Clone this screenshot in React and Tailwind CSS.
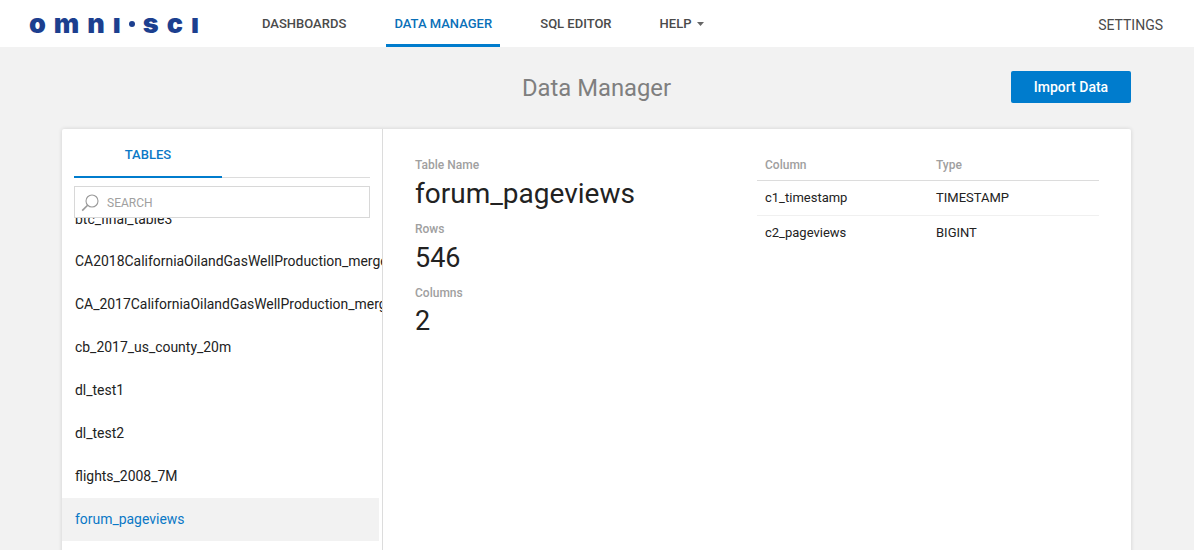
import React from "react";

const tables = [
  "CA2018CaliforniaOilandGasWellProduction_merged",
  "CA_2017CaliforniaOilandGasWellProduction_merged",
  "cb_2017_us_county_20m",
  "dl_test1",
  "dl_test2",
  "flights_2008_7M",
];

function Nav({ children, active, className = "" }) {
  return (
    <div className={`h-full flex items-center border-b-[3px] text-[13px] font-medium leading-none pt-[3px] ${active ? "border-[#007ccd] text-[#0a70b8]" : "border-transparent text-[#4a4a4a]"} ${className}`}>
      {children}
    </div>
  );
}

function Stat({ label, value, valueClass }) {
  return (
    <div>
      <div className="text-[12px] font-medium text-[#a0a0a0] leading-[14px]">{label}</div>
      <div className={`${valueClass} h-[40px] text-[#222]`}>{value}</div>
    </div>
  );
}

export default function App() {
  return (
    <div className="w-[1194px] h-[550px] overflow-hidden bg-[#f2f2f2] font-['Roboto',sans-serif]">
      <header className="h-[47px] bg-white flex items-stretch pl-[29px] pr-[31px]">
        <div className="w-[170px] self-center flex items-center justify-between font-['Inter',sans-serif] font-black text-[27px] leading-none text-[#1c3f8f] h-[30px] -mt-[1px]">
          <span>o</span><span>m</span><span>n</span><span>ı</span>
          <span className="w-[6px] h-[6px] rounded-full bg-[#1c3f8f] mt-[2px]" />
          <span>s</span><span>c</span><span>ı</span>
        </div>
        <nav className="flex items-stretch ml-[63px]">
          <Nav>DASHBOARDS</Nav>
          <Nav active className="ml-[40px] px-2 w-[114px] justify-center">DATA MANAGER</Nav>
          <Nav className="ml-[40px]">SQL EDITOR</Nav>
          <Nav className="ml-[48px]">
            HELP
            <svg className="ml-[6px] mt-[1px]" width="7" height="4" viewBox="0 0 7 4"><path d="M0 0h7L3.5 4z" fill="#666" /></svg>
          </Nav>
        </nav>
        <div className="ml-auto self-center pt-[3px] text-[14px] text-[#4a4a4a]">SETTINGS</div>
      </header>

      <div className="relative h-[82px] flex items-center justify-center">
        <h1 className="text-[23.8px] text-[#7f7f7f] leading-none pt-[2px] pr-[1px]">Data Manager</h1>
        <button className="absolute left-[1011px] top-[24px] w-[120px] h-[32px] bg-[#007ccd] rounded-[2px] text-white text-[14px] font-medium">Import Data</button>
      </div>

      <main className="mx-[62px] w-[1069px] h-[500px] bg-white rounded-t-[2px] shadow-[0_0_4px_rgba(0,0,0,0.14)] flex">
        <aside className="w-[321px] border-r border-[#dcdcdc] shrink-0 flex flex-col relative">
          <div className="mx-[12px] h-[49px] border-b border-[#dcdcdc]">
            <div className="w-[148px] h-[49px] border-b-2 border-[#007ccd] text-[#0a78c6] text-[13px] font-medium flex items-center justify-center pt-[4px]">TABLES</div>
          </div>
          <div className="relative z-10 mx-[12px] mt-[8px] h-[32px] bg-white border border-[#d8d8d8] flex items-center pl-[6px] pt-[1px] text-[12px] text-[#a0a0a0]">
            <svg width="18" height="18" viewBox="0 0 18 18" fill="none" stroke="#9a9a9a" strokeWidth="1.1" className="mr-[8px]">
              <circle cx="11" cy="7" r="6" />
              <path d="M6.6 11.2 1.2 16.6" strokeWidth="1.6" />
            </svg>
            SEARCH
          </div>
          <div className="flex-1 overflow-hidden -mt-[9px]">
            <div className="h-[31px] pl-[13px] text-[13.95px] text-[#222] leading-[20px] whitespace-nowrap">btc_final_table3</div>
            {tables.map((t) => (
              <div key={t} className="h-[43px] pl-[13px] flex items-center text-[13.95px] text-[#222] whitespace-nowrap overflow-hidden">{t}</div>
            ))}
            <div className="h-[43px] w-[317px] pl-[13px] flex items-center text-[13.95px] text-[#0a78c6] bg-[#f2f2f2]">forum_pageviews</div>
          </div>
        </aside>

        <section className="flex-1 flex pt-[29px] pl-[32px]">
          <div className="w-[342px]">
            <Stat label="Table Name" value="forum_pageviews" valueClass="text-[28px] leading-[44px]" />
            <div className="mt-[10px]"><Stat label="Rows" value="546" valueClass="text-[27px] leading-[44px]" /></div>
            <div className="mt-[10px]"><Stat label="Columns" value="2" valueClass="text-[27px] leading-[42px]" /></div>
          </div>
          <div className="w-[342px]">
            <div className="h-[23px] border-b border-[#dcdcdc] flex text-[12px] font-medium text-[#a0a0a0] pl-[8px] leading-[14px]">
              <div className="w-[171px]">Column</div><div>Type</div>
            </div>
            <div className="h-[35px] border-b border-[#f0f0f0] flex items-center text-[13px] text-[#222] pl-[8px]">
              <div className="w-[171px]">c1_timestamp</div><div>TIMESTAMP</div>
            </div>
            <div className="h-[33px] flex items-center text-[13px] text-[#222] pl-[8px]">
              <div className="w-[171px]">c2_pageviews</div><div>BIGINT</div>
            </div>
          </div>
        </section>
      </main>
    </div>
  );
}
